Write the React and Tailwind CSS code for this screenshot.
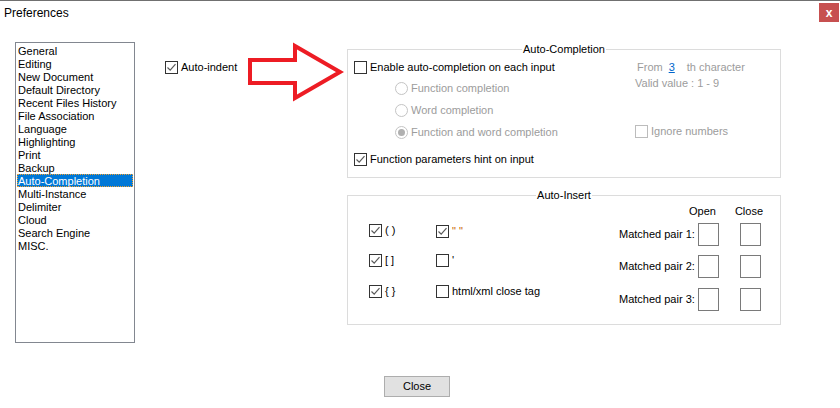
import React from 'react'

const font = { fontFamily: '"Liberation Sans", Arial, sans-serif' }

const Check = ({ checked, disabled }) => (
  <span
    className={
      'inline-flex w-[13px] h-[13px] shrink-0 items-center justify-center border bg-white ' +
      (disabled ? 'border-[#bcbcbc]' : 'border-[#333333]')
    }
  >
    {checked && (
      <svg width="11" height="11" viewBox="0 0 11 11">
        <path d="M1.5 5.5 L4.2 8.2 L9.5 2.2" fill="none" stroke="#5a5a5a" strokeWidth="1.2" />
      </svg>
    )}
  </span>
)

const Radio = ({ on }) => (
  <span className="inline-flex w-[13px] h-[13px] shrink-0 items-center justify-center rounded-full border border-[#c4c4c4] bg-white">
    {on && <span className="w-[7px] h-[7px] rounded-full bg-[#b0b0b0]" />}
  </span>
)

const CheckRow = ({ checked, disabled, label, className = '' }) => (
  <div className={'flex items-center h-[13px] ' + className}>
    <Check checked={checked} disabled={disabled} />
    <span className={'ml-[3px] whitespace-nowrap ' + (disabled ? 'text-[#9c9c9c]' : 'text-black')}>{label}</span>
  </div>
)

const RadioRow = ({ on, label, className = '' }) => (
  <div className={'flex items-center h-[13px] ml-[41px] ' + className}>
    <Radio on={on} />
    <span className="ml-[3px] whitespace-nowrap text-[#9c9c9c]">{label}</span>
  </div>
)

const Group = ({ title, className = '', children }) => (
  <div className={'relative border border-[#dcdcdc] ' + className}>
    <span className="absolute left-0 right-0 -top-[8px] flex justify-center leading-[14px]">
      <span className="bg-white px-[1px]">{title}</span>
    </span>
    {children}
  </div>
)

const PairBox = () => <span className="block w-[21px] h-[23px] border border-[#7a7a7a] bg-white" />

const items = [
  'General',
  'Editing',
  'New Document',
  'Default Directory',
  'Recent Files History',
  'File Association',
  'Language',
  'Highlighting',
  'Print',
  'Backup',
  'Auto-Completion',
  'Multi-Instance',
  'Delimiter',
  'Cloud',
  'Search Engine',
  'MISC.',
]

export default function App() {
  return (
    <div className="relative w-[840px] h-[408px] bg-white text-[11px] text-black overflow-hidden" style={font}>
      {/* title bar */}
      <div className="flex items-start h-[26px] border-t border-[#707070]">
        <span className="ml-[4px] mt-[5px] text-[12px] leading-[14px]">Preferences</span>
        <span className="ml-auto mt-[2px] mr-[1px] w-[20px] h-[19px] bg-[#c75050] flex items-center justify-center text-white font-bold text-[12px] leading-none">
          x
        </span>
      </div>

      <div className="flex items-start pt-[16px]">
        {/* category list */}
        <div className="ml-[15px] w-[120px] h-[301px] border border-[#828790] pt-[1px] px-[1px]">
          {items.map((it) => (
            <div
              key={it}
              className={
                'h-[13px] leading-[14px] px-[1px] whitespace-nowrap ' +
                (it === 'Auto-Completion'
                  ? 'bg-[#0078d7] text-white outline-1 outline-dotted outline-[#f0a030] -outline-offset-1'
                  : '')
              }
            >
              {it}
            </div>
          ))}
        </div>

        <div className="ml-[30px] w-[182px] mt-[19px]">
          <CheckRow checked label="Auto-indent" />
        </div>

        <div className="mt-[7px]">
          <Group title="Auto-Completion" className="w-[434px] h-[129px]">
            <div className="flex pt-[11px] pl-[6px]">
              <div className="w-[281px]">
                <CheckRow label="Enable auto-completion on each input" />
                <RadioRow label="Function completion" className="mt-[8px]" />
                <RadioRow label="Word completion" className="mt-[9px]" />
                <RadioRow on label="Function and word completion" className="mt-[9px]" />
                <CheckRow checked label="Function parameters hint on input" className="mt-[14px]" />
              </div>
              <div className="text-[#9c9c9c]">
                <div className="flex items-center h-[13px] pl-[2px]">
                  <span>From</span>
                  <span className="ml-[6px] text-[#0066cc] underline">3</span>
                  <span className="ml-[12px]">th character</span>
                </div>
                <div className="h-[13px] leading-[13px] mt-[3px]">Valid value : 1 - 9</div>
                <CheckRow disabled label="Ignore numbers" className="mt-[35px]" />
              </div>
            </div>
          </Group>

          <Group title="Auto-Insert" className="w-[434px] h-[130px] mt-[17px]">
            <div className="flex items-start">
              <div className="pt-[28px] pl-[21px] flex flex-col">
                <div className="flex">
                  <CheckRow checked label="( )" className="w-[67px]" />
                  <CheckRow checked label={<span className="text-[#c86400]">" "</span>} className="mt-[1px]" />
                </div>
                <div className="flex mt-[16px]">
                  <CheckRow checked label="[ ]" className="w-[67px]" />
                  <CheckRow label="'" />
                </div>
                <div className="flex mt-[18px]">
                  <CheckRow checked label="{ }" className="w-[67px]" />
                  <CheckRow label="html/xml close tag" />
                </div>
              </div>
              <div className="ml-auto mr-[19px] w-[142px] shrink-0 pt-[9px]">
                <div className="flex h-[12px] leading-[12px] whitespace-nowrap">
                  <span className="ml-[70px] shrink-0">Open</span>
                  <span className="ml-[19px] shrink-0">Close</span>
                </div>
                {['1', '2', '3'].map((n, i) => (
                  <div key={n} className={'flex items-center h-[23px] ' + (i === 0 ? 'mt-[6px]' : i === 1 ? 'mt-[9px]' : 'mt-[10px]')}>
                    <span className="w-[75px] shrink-0 text-right whitespace-nowrap">Matched pair {n}:</span>
                    <span className="ml-[4px]">
                      <PairBox />
                    </span>
                    <span className="ml-[21px]">
                      <PairBox />
                    </span>
                  </div>
                ))}
              </div>
            </div>
          </Group>
        </div>
      </div>

      <div className="pl-[384px] mt-[33px]">
        <button className="w-[66px] h-[21px] bg-[#e1e1e1] border border-[#adadad] text-[11px] leading-[19px] text-black">
          Close
        </button>
      </div>

      {/* red arrow annotation */}
      <svg className="absolute left-0 top-0 pointer-events-none" width="840" height="408">
        <polygon
          points="250,60 295,60 295,46 340,72 295,98 295,83 250,83"
          fill="none"
          stroke="#ed1c24"
          strokeWidth="4"
          strokeLinejoin="miter"
        />
      </svg>
    </div>
  )
}
